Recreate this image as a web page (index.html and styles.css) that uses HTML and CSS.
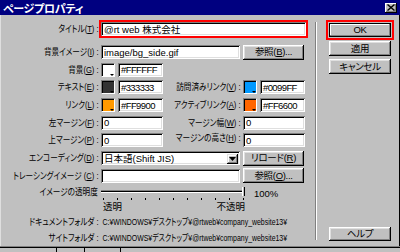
FILE: index.html
```html
<!DOCTYPE html>
<html lang="ja">
<head>
  <meta charset="UTF-8">
  <title>ページプロパティ</title>
  <link rel="stylesheet" href="styles.css">
</head>
<body>

<div class="window">
  <div class="titlebar">
    <span class="title">ページプロパティ</span>
    <span class="close">
      <svg width="8" height="7" viewBox="0 0 8 7"><path d="M0.5 0.5 L7.5 6.5 M7.5 0.5 L0.5 6.5" stroke="#000" stroke-width="1.4" fill="none"/></svg>
    </span>
  </div>

  <div class="dialog">
    <div class="form">
      <div class="row r1">
        <span class="lbl">タイトル(<u>T</u>) :</span>
        <div class="hilite"><span class="field title-field">@rt web 株式会社</span></div>
      </div>

      <div class="row r2">
        <span class="lbl">背景イメージ(<u>I</u>) :</span>
        <span class="field long">image/bg_side.gif</span>
        <span class="btn small">参照(<u>B</u>)...</span>
      </div>

      <div class="row r3">
        <span class="lbl">背景(<u>G</u>) :</span>
        <span class="swatch white"></span>
        <span class="field hex">#FFFFFF</span>
      </div>

      <div class="row r4">
        <span class="lbl">テキスト(<u>E</u>) :</span>
        <span class="swatch dark"></span>
        <span class="field hex">#333333</span>
        <span class="lbl2">訪問済みリンク(<u>V</u>) :</span>
        <span class="swatch blue"></span>
        <span class="field hex">#0099FF</span>
      </div>

      <div class="row r5">
        <span class="lbl">リンク(<u>L</u>) :</span>
        <span class="swatch orange"></span>
        <span class="field hex">#FF9900</span>
        <span class="lbl2">アクティブリンク(<u>A</u>) :</span>
        <span class="swatch red"></span>
        <span class="field hex">#FF6600</span>
      </div>

      <div class="row r6">
        <span class="lbl">左マージン(<u>F</u>) :</span>
        <span class="field num">0</span>
        <span class="lbl2">マージン幅(<u>W</u>) :</span>
        <span class="field num">0</span>
      </div>

      <div class="row r7">
        <span class="lbl">上マージン(<u>P</u>) :</span>
        <span class="field num">0</span>
        <span class="lbl2 up">マージンの高さ(<u>H</u>) :</span>
        <span class="field num">0</span>
      </div>

      <div class="row r8">
        <span class="lbl">エンコーディング(<u>D</u>) :</span>
        <span class="field long select">日本語(Shift JIS)<span class="drop"><svg width="7" height="4" viewBox="0 0 7 4"><path d="M0 0 H7 L3.5 4 Z" fill="#000"/></svg></span></span>
        <span class="btn small">リロード(<u>R</u>)</span>
      </div>

      <div class="row r9">
        <span class="lbl">トレーシングイメージ (<u>C</u>) :</span>
        <span class="field long"></span>
        <span class="btn small">参照(<u>O</u>)...</span>
      </div>

      <div class="opacity">
        <span class="lbl">イメージの透明度</span>
        <div class="slider">
          <div class="track"><span class="line"></span><span class="thumb"></span></div>
          <div class="ticks"><i></i><i></i><i></i><i></i><i></i><i></i><i></i><i></i><i></i><i></i><i></i></div>
          <div class="ends"><span>透明</span><span>不透明</span></div>
        </div>
        <span class="pct">100%</span>
      </div>

      <div class="row folder f1">
        <span class="lbl">ドキュメントフォルダ :</span>
        <span class="path">C:¥WINDOWS¥デスクトップ¥@rtweb¥company_website13¥</span>
      </div>
      <div class="row folder f2">
        <span class="lbl">サイトフォルダ :</span>
        <span class="path">C:¥WINDOWS¥デスクトップ¥@rtweb¥company_website13¥</span>
      </div>
    </div>

    <div class="sep"></div>

    <div class="side">
      <div class="hilite ok-wrap"><span class="btn side-btn default">OK</span></div>
      <span class="btn side-btn apply">適用</span>
      <span class="btn side-btn cancel">キャンセル</span>
      <span class="btn side-btn help">ヘルプ</span>
    </div>
  </div>

  <div class="under">
    <span class="cell c1"></span>
    <span class="cell c2"></span>
    <span class="cell c3"></span>
  </div>
</div>

</body>
</html>
```

FILE: styles.css
```css
* {
  box-sizing: border-box;
}

body {
  margin: 0;
  background: #c0c0c0;
  font-family: "Liberation Sans", "Noto Sans CJK JP", sans-serif;
  font-size: 9.5px;
  line-height: 12px;
  color: #000;
  font-feature-settings: "palt";
}

u {
  text-decoration: underline;
  text-underline-offset: 1px;
}

.window {
  width: 400px;
  height: 252px;
  overflow: hidden;
  display: flex;
  flex-direction: column;
  background: #c0c0c0;
}

/* title bar */
.titlebar {
  height: 15px;
  flex: none;
  background: #000080;
  color: #fff;
  display: flex;
  align-items: center;
  justify-content: space-between;
  padding: 0 3px 0 3px;
}

.title {
  font-family: "Noto Sans CJK JP", sans-serif;
  font-weight: bold;
  font-size: 11px;
  letter-spacing: -0.3px;
}

.close {
  width: 12px;
  height: 10px;
  background: #c0c0c0;
  display: flex;
  align-items: center;
  justify-content: center;
  box-shadow: inset -1px -1px #000, inset 1px 1px #fff, inset -2px -2px #808080;
}

/* dialog body */
.dialog {
  flex: 1;
  display: flex;
  border-left: 1px solid #dfdfdf;
  border-right: 1px solid #000;
}

.form {
  width: 314px;
  padding-top: 5px;
  display: flex;
  flex-direction: column;
}

.row {
  display: flex;
  align-items: center;
  height: 18px;
}

.r1 { height: 18px; margin-bottom: 5px; }
.r3 { height: 17px; }
.r6 { height: 17px; }
.r9 { height: 17px; }

/* the dialog font is a condensed bitmap face, so labels get squeezed */
.lbl {
  width: 100px;
  flex: none;
  display: flex;
  justify-content: flex-end;
  padding-right: 3px;
  white-space: nowrap;
  transform: scaleX(0.8);
  transform-origin: right center;
}

.lbl2 {
  width: 80px;
  flex: none;
  display: flex;
  justify-content: flex-end;
  padding-right: 3px;
  white-space: nowrap;
  transform: scaleX(0.8);
  transform-origin: right center;
}

.lbl2.up {
  margin-top: -5px;
}

.hilite {
  border: 2px solid #f00;
  display: flex;
}

.r1 .hilite {
  margin-left: -2px;
}

.field {
  height: 14px;
  background: #fff;
  display: flex;
  align-items: center;
  padding: 1px 3px 0;
  white-space: nowrap;
  overflow: hidden;
  box-shadow: inset 1px 1px #808080, inset -1px -1px #fff, inset 2px 2px #000, inset -2px -2px #dfdfdf;
}

.title-field {
  width: 205px;
}

.long {
  width: 139px;
  margin-right: 3px;
}

.hex {
  width: 45px;
  letter-spacing: -0.6px;
}

.num {
  width: 62px;
}

.select {
  justify-content: space-between;
  padding-right: 2px;
}

.drop {
  width: 11px;
  height: 10px;
  background: #c0c0c0;
  display: flex;
  align-items: center;
  justify-content: center;
  box-shadow: inset -1px -1px #000, inset 1px 1px #dfdfdf, inset -2px -2px #808080, inset 2px 2px #fff;
}

.swatch {
  width: 14px;
  height: 14px;
  margin-right: 3px;
  display: flex;
  justify-content: flex-end;
  align-items: flex-end;
  border: 1px solid #808080;
  border-right-color: #fff;
  border-bottom-color: #fff;
  box-shadow: inset 1px 1px #000;
}

.swatch::after {
  content: "";
  width: 0;
  height: 0;
  border-left: 2px solid transparent;
  border-right: 2px solid transparent;
  border-top: 2px solid #000;
}

.white { background: #fff; }
.dark { background: #333333; }
.blue { background: #0099ff; }
.orange { background: #ff9900; }
.red { background: #ff6600; }

/* buttons */
.btn {
  height: 15px;
  display: flex;
  align-items: center;
  justify-content: center;
  background: #c0c0c0;
  white-space: nowrap;
  letter-spacing: -0.3px;
  box-shadow: inset -1px -1px #000, inset 1px 1px #fff, inset -2px -2px #808080, inset 2px 2px #dfdfdf;
}

.small {
  width: 61px;
}

/* opacity slider */
.opacity {
  display: flex;
  align-items: flex-start;
  height: 30px;
  padding-top: 2px;
}

.opacity .lbl {
  padding-right: 4px;
}

.slider {
  width: 144px;
  display: flex;
  flex-direction: column;
}

.track {
  height: 10px;
  display: flex;
  align-items: center;
}

.line {
  flex: 1;
  height: 3px;
  border-top: 1px solid #808080;
  border-bottom: 1px solid #fff;
  background: #000;
}

.thumb {
  width: 3px;
  height: 9px;
  border-left: 1px solid #fff;
  border-right: 1px solid #000;
  background: #c0c0c0;
}

.ticks {
  display: flex;
  justify-content: space-between;
  padding: 0 1px 0 2px;
  margin-top: 2px;
}

.ticks i {
  width: 1px;
  height: 2px;
  background: #000;
}

.ends {
  display: flex;
  justify-content: space-between;
  padding-left: 2px;
  margin-top: 1px;
}

.pct {
  margin-left: 9px;
  margin-top: 2px;
}

/* folders */
.folder {
  height: 16px;
}

.f2 {
  height: 15px;
}

.path {
  padding-left: 2px;
  white-space: nowrap;
  transform: scaleX(0.73);
  transform-origin: left center;
}

/* side buttons */
.sep {
  width: 2px;
  margin: 7px 0 6px;
  border-left: 1px solid #808080;
  border-right: 1px solid #fff;
}

.side {
  flex: 1;
  display: flex;
  flex-direction: column;
  padding: 5px 0 5px 12px;
}

.ok-wrap {
  width: 68px;
  margin-left: -3px;
  padding: 1px;
}

.side-btn {
  width: 62px;
}

.default {
  height: 14px;
  box-shadow: inset 0 0 0 1px #000, inset -2px -2px #808080, inset 2px 2px #fff;
}

.apply {
  margin-top: 1px;
}

.cancel {
  margin-top: 3px;
}

.help {
  margin-top: auto;
  height: 14px;
}

/* window underneath */
.under {
  height: 6px;
  flex: none;
  display: flex;
  background: #c0c0c0;
  border-top: 1px solid #808080;
  box-shadow: inset 0 1px #000;
}

.cell {
  height: 100%;
  border-right: 1px solid #000;
}

.c1 { width: 57px; }
.c2 { width: 28px; }
.c3 { width: 36px; }
```
